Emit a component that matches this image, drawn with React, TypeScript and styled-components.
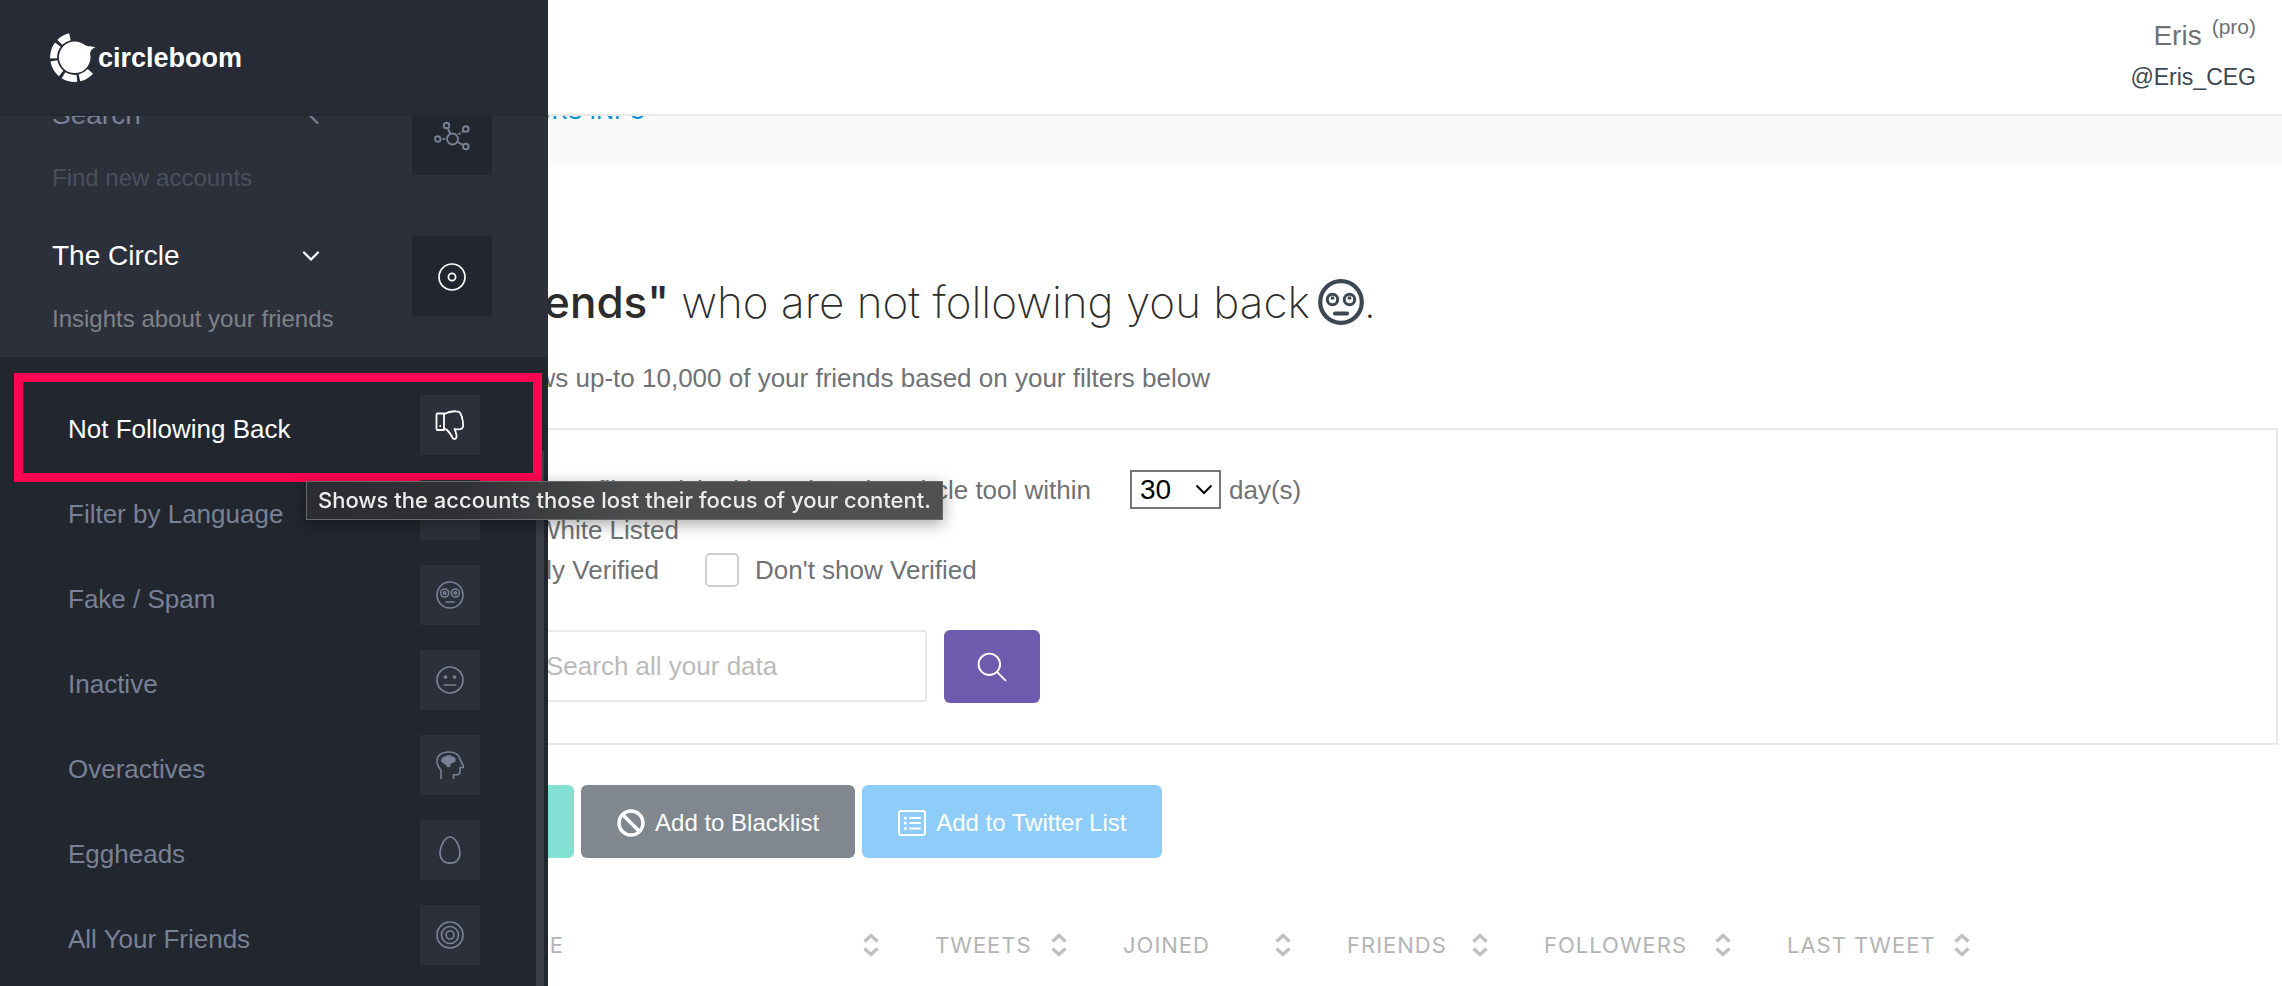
import React from 'react';
import styled, { createGlobalStyle } from 'styled-components';

const sans = '"Liberation Sans", Arial, sans-serif';
const display = 'Inter, "Liberation Sans", sans-serif';

const GlobalStyle = createGlobalStyle`
  * { box-sizing: border-box; }
  html, body { margin: 0; }
  body {
    background: #fff;
    color: #6f7275;
    font: 26px/40px ${sans};
    overflow: hidden;
  }
  button, input, select { font-family: inherit; }
  h1, p, ul { margin: 0; padding: 0; }
`;

/* ---------- page frame ---------- */

const Page = styled.div`
  min-height: 100vh;
  padding: 70px 4px 0 140px;
`;

const TopBar = styled.header`
  position: fixed;
  inset: 0 0 auto 0;
  z-index: 2;
  height: 116px;
  padding: 14px 26px 0;
  background: #fff;
  border-bottom: 2px solid #e9e9e9;
  display: flex;
  flex-direction: column;
  align-items: flex-end;
`;

const UserName = styled.div`
  font-size: 28px;
  line-height: 44px;
  display: flex;
  gap: 10px;
`;

const Plan = styled.span`
  font-size: 21px;
  line-height: 26px;
`;

const Handle = styled.a`
  color: #3b4752;
  font-size: 23px;
  line-height: 38px;
  text-decoration: none;
`;

const Crumbs = styled.nav`
  margin: 0 -4px 0 -140px;
  height: 95px;
  padding: 20px 0 0 534px;
  background: #fafafa;
  a {
    color: #0090d9;
    font: 24px/38px ${display};
    text-decoration: none;
  }
`;

/* ---------- sidebar ---------- */

const Sidebar = styled.aside`
  position: fixed;
  inset: 0 auto 0 0;
  z-index: 3;
  width: 548px;
  background: #2c303b;
  overflow: hidden;
  display: flex;
  flex-direction: column;
`;

const Brand = styled.div`
  flex: none;
  position: relative;
  z-index: 1;
  height: 116px;
  margin-bottom: -21px;
  padding: 2px 50px 0;
  background: #272b35;
  border-bottom: 2px solid #242831;
  display: flex;
  align-items: center;
  color: #fff;
  font: bold 27px/40px ${sans};
`;

const MenuItem = styled.div<{ $active?: boolean }>`
  flex: none;
  height: ${(p) => (p.$active ? 121 : 141)}px;
  padding: 0 56px 0 52px;
  display: flex;
  justify-content: space-between;
  color: ${(p) => (p.$active ? '#fff' : '#788195')};
`;

const MenuText = styled.div`
  width: 288px;
  white-space: nowrap;
`;

const MenuTitle = styled.button`
  width: 100%;
  padding: 0 20px 0 0;
  border: 0;
  background: none;
  color: inherit;
  font-size: 28px;
  line-height: 40px;
  display: flex;
  align-items: center;
  justify-content: space-between;
`;

const MenuDetail = styled.p<{ $active?: boolean }>`
  margin-top: 27px;
  font-size: 24px;
  line-height: 32px;
  color: ${(p) => (p.$active ? '#7e8188' : '#4b4f5d')};
`;

const IconBox = styled.span<{ $large?: boolean }>`
  flex: none;
  width: ${(p) => (p.$large ? 80 : 60)}px;
  height: ${(p) => (p.$large ? 80 : 60)}px;
  padding-top: ${(p) => (p.$large ? 2 : 0)}px;
  background: ${(p) => (p.$large ? '#22262f' : '#2c303b')};
  display: grid;
  place-items: center;
`;

const SubMenu = styled.ul`
  flex: 1;
  position: relative;
  padding: 38px 68px 0;
  background: #22262f;
  list-style: none;
`;

const SubItem = styled.li`
  position: relative;
  margin-bottom: 25px;
`;

const SubLink = styled.a<{ $active?: boolean }>`
  height: 60px;
  display: flex;
  align-items: flex-end;
  justify-content: space-between;
  color: ${(p) => (p.$active ? '#fff' : '#788195')};
  line-height: 52px;
  text-decoration: none;
`;

const Highlight = styled.div`
  position: absolute;
  inset: -22px -62px -27px -54px;
  border: 9px solid #ff0450;
`;

const ScrollThumb = styled.div`
  position: absolute;
  inset: 94px 4px 0 auto;
  width: 8px;
  background: #393e49;
`;

const Tooltip = styled.div`
  position: fixed;
  top: 481px;
  left: 306px;
  z-index: 4;
  padding: 0 11px;
  border: 1px solid #68696b;
  background: linear-gradient(90deg, #2c2d31 0, #2f3034 24%, #4c4c4d 50%, #505051);
  box-shadow: 0 4px 16px rgba(0, 0, 0, 0.35);
  color: #ececec;
  font: 500 22px/37px ${display};
  white-space: nowrap;
`;

/* ---------- content ---------- */

const Heading = styled.h1`
  width: 1236px;
  margin-top: 105px;
  color: #2c2c2c;
  font: 200 44px/64px ${display};
  display: flex;
  justify-content: flex-end;
  align-items: center;
  white-space: pre;
  strong { font-weight: 500; }
  svg { margin-left: 8px; }
`;

const Lead = styled.p`
  width: 1070px;
  margin-top: 24px;
  text-align: right;
  white-space: nowrap;
`;

const Panel = styled.form`
  margin-top: 30px;
  padding: 40px 0;
  border: 2px solid #e9e9e9;
`;

const Line = styled.div`
  height: 40px;
  display: flex;
  align-items: center;
`;

const Lining = styled.label<{ $width: number }>`
  width: ${(p) => p.$width}px;
  display: flex;
  justify-content: flex-end;
  align-items: center;
  gap: 17px;
  white-space: nowrap;
`;

const CheckLabel = styled.label`
  margin-left: 46px;
  display: flex;
  align-items: center;
  gap: 16px;
`;

const Check = styled.input`
  appearance: none;
  width: 34px;
  height: 34px;
  margin: 0;
  border: 2px solid #d0d0d0;
  border-radius: 5px;
  background: #fff;
`;

const SelectWrap = styled.span`
  position: relative;
  margin: 0 8px 0 39px;
  display: flex;
  align-self: flex-start;
  svg {
    position: absolute;
    top: 14px;
    right: 8px;
    pointer-events: none;
  }
`;

const Select = styled.select`
  appearance: none;
  width: 91px;
  height: 39px;
  padding: 0 8px;
  border: 2px solid #767676;
  border-radius: 0;
  background: #fff;
  color: #000;
  font-size: 28px;
  line-height: 32px;
`;

const SearchRow = styled.div`
  margin-top: 40px;
  padding-left: 384px;
  display: flex;
  gap: 17px;
`;

const SearchInput = styled.input`
  width: 401px;
  height: 72px;
  padding: 0 18px;
  border: 2px solid #e9e9e9;
  border-radius: 3px;
  font-size: 26px;
  &::placeholder { color: #bababa; opacity: 1; }
`;

const Button = styled.button<{ $bg: string }>`
  height: 73px;
  padding: 2px 36px 0;
  border: 0;
  border-radius: 6px;
  background: ${(p) => p.$bg};
  color: #fff;
  font-size: 24px;
  line-height: 36px;
  display: flex;
  align-items: center;
  gap: 10px;
  white-space: nowrap;
`;

const SearchButton = styled(Button)`
  width: 96px;
  padding: 0;
  justify-content: center;
`;

const Actions = styled.div`
  margin: 40px 0 67px;
  padding-left: 206px;
  display: flex;
  gap: 7px;
`;

const Table = styled.table`
  border-collapse: collapse;
  table-layout: fixed;
  width: 100%;
  th { padding: 0; }
`;

const SortButton = styled.button`
  width: 100%;
  height: 40px;
  padding: 0 56px 0 0;
  border: 0;
  background: none;
  color: #b4b4b4;
  font: 400 22px/40px ${display};
  letter-spacing: 1px;
  text-align: left;
  display: flex;
  justify-content: space-between;
  align-items: center;
`;

const Th = styled.th<{ $width: number }>`
  width: ${(p) => p.$width}px;
`;

/* ---------- drawings ---------- */

const polar = (r: number, deg: number) => {
  const a = (deg * Math.PI) / 180;
  return `${(27.7 + r * Math.cos(a)).toFixed(2)} ${(25.3 - r * Math.sin(a)).toFixed(2)}`;
};

const ringParts = [[103, 135], [143, 183], [190, 230], [238, 276], [283, 318]];

const Logo = () => (
  <svg width="48" height="52" viewBox="3 0 48 52" fill="#fff" aria-hidden="true">
    {ringParts.map(([a, b]) => (
      <path
        key={a}
        d={`M${polar(24.6, a)}A24.6 24.6 0 0 0 ${polar(24.6, b)}L${polar(17.6, b)}A17.6 17.6 0 0 1 ${polar(17.6, a)}Z`}
      />
    ))}
    <circle cx="27.7" cy="25.3" r="15.8" />
    <path d="M35 11.5c3 2 6 3 8 2.8L48.5 15.2c-3 1-5 3-5.5 6.5l-4 3z" />
  </svg>
);

const Stroke = ({ size = 28, width = 1.7, children }: { size?: number; width?: number; children: React.ReactNode }) => (
  <svg
    width={size}
    height={size}
    viewBox="0 0 28 28"
    fill="none"
    stroke="currentColor"
    strokeWidth={width}
    strokeLinecap="round"
    strokeLinejoin="round"
    aria-hidden="true"
  >
    {children}
  </svg>
);

const NetworkIcon = () => (
  <svg width="36" height="30" viewBox="0 0 36 30" fill="none" stroke="currentColor" strokeWidth="1.9" aria-hidden="true">
    <circle cx="18.5" cy="18" r="5.5" />
    <circle cx="3.8" cy="18" r="2.8" />
    <circle cx="12.5" cy="4.5" r="2.8" />
    <circle cx="31.8" cy="8" r="2.8" />
    <circle cx="31.8" cy="25.5" r="2.8" />
    <path d="M8.5 18h2.5M13.8 7.2l2.5 5.8M23.3 20.8l6 3.4M24.5 13.5l2-1.5M27.8 11.2l1.5-1" />
  </svg>
);

const DiscIcon = () => (
  <Stroke>
    <circle cx="14" cy="14" r="13" />
    <circle cx="14" cy="14" r="3.6" />
  </Stroke>
);

const ThumbsDownIcon = () => (
  <svg width="30" height="32" viewBox="0 0 30 32" fill="none" stroke="currentColor" strokeWidth="1.8" strokeLinejoin="round" aria-hidden="true">
    <path d="M9 4.500H2.500a1 1 0 0 0-1 1v14.500a1 1 0 0 0 1 1H9z" />
    <path d="M9 5C13 3 17 2 21 2.300c3.500 0 4.800 1.400 5 3.700 1 1.200 1.200 2.400 1 3.600 1 1.400 1.200 2.600.8 4 1 3.800 0 6.200-2.500 6.600-2.500.3-4.300 0-5.800-.2 1.500 3.500 2.500 6 2 8.300-.5 2.200-3.500 2.500-4.200 0C16 25 13 22 11.500 20.500L9 19.500" />
    <circle cx="5.2" cy="17" r="1" fill="currentColor" stroke="none" />
  </svg>
);

const RollingEyesIcon = () => (
  <Stroke width={1.6}>
    <circle cx="14" cy="14" r="13" />
    <circle cx="8.7" cy="12" r="4" />
    <circle cx="19.3" cy="12" r="4" />
    <circle cx="8.7" cy="12" r="1.2" />
    <circle cx="19.3" cy="12" r="1.2" />
    <path d="M10 21h8" />
  </Stroke>
);

const NeutralIcon = () => (
  <Stroke>
    <circle cx="14" cy="14" r="13" />
    <circle cx="9.5" cy="11" r="1" fill="currentColor" />
    <circle cx="18.5" cy="11" r="1" fill="currentColor" />
    <path d="M8.5 19h11" />
  </Stroke>
);

const HeadIcon = () => (
  <Stroke width={1.6}>
    <path d="M5 27.500V19C2.500 16.500 1 14 1 10.500 1 4.500 5.500 1 13 1c7 0 10.500 2.500 11.500 8.500L27.500 15v1.500H24V20c0 2.500-1 3.800-3 3.800h-3.500v3.700" />
    <path d="M6 8.500C7 6.500 9 6.500 10 6c2-1.500 5-1 6 .2 2.500 0 3.500 2 2.500 3.800-1 1.500-3 1-4 2l-1.200 3.500-2-.3-.5-2.200c-2 .5-2.500-1-3-1.500C6 11 5.500 9.500 6 8.500z" fill="currentColor" />
  </Stroke>
);

const EggIcon = () => (
  <Stroke>
    <path d="M14 1C9 1 4 9.500 4 17c0 6.500 4.500 10.200 10 10.200S24 23.500 24 17C24 9.500 19 1 14 1z" />
  </Stroke>
);

const TargetIcon = () => (
  <Stroke>
    <circle cx="14" cy="14" r="13" />
    <circle cx="14" cy="14" r="8.5" />
    <circle cx="14" cy="14" r="4" />
  </Stroke>
);

const HeadingFace = () => (
  <svg width="46" height="46" viewBox="0 0 46 46" fill="none" stroke="#3b4752" aria-hidden="true">
    <circle cx="23" cy="23" r="20.8" strokeWidth="4.2" />
    <circle cx="14.5" cy="20.5" r="5.2" strokeWidth="3" />
    <circle cx="31.5" cy="20.5" r="5.2" strokeWidth="3" />
    <path d="M14.5 17.5v3M31.5 17.5v3" strokeWidth="3.5" />
    <path d="M17 34.5h12" strokeWidth="4.2" strokeLinecap="round" />
  </svg>
);

const Chevron = ({ left }: { left?: boolean }) => (
  <svg width="18" height="18" viewBox="0 0 18 18" fill="none" stroke="currentColor" strokeWidth="2.2" strokeLinecap="round" aria-hidden="true">
    <path d={left ? 'M15 1L7.5 9l8 8' : 'M2 5.5l7 7 7-7'} />
  </svg>
);

const SearchIcon = () => (
  <Stroke size={30} width={1.8}>
    <circle cx="11.5" cy="11.5" r="10" />
    <path d="M19 19l7.5 7.5" />
  </Stroke>
);

const BanIcon = () => (
  <Stroke width={3.4}>
    <circle cx="14" cy="14" r="12" />
    <path d="M6 6l16 16" />
  </Stroke>
);

const ListIcon = () => (
  <Stroke width={2}>
    <rect x="1" y="2" width="26" height="24" rx="2" />
    <path d="M12 9h10M12 14h10M12 19.5h10" />
    <path d="M7.3 9h.1M7.3 14h.1M7.3 19.5h.1" strokeWidth="3" />
  </Stroke>
);

const SortIcon = () => (
  <svg width="16" height="24" viewBox="0 0 16 24" fill="none" stroke="#c0c0c0" strokeWidth="3.4" aria-hidden="true">
    <path d="M1.5 8.5L8 2.500l6.500 6M1.500 15.500l6.500 6 6.500-6" />
  </svg>
);

/* ---------- data ---------- */

const subItems = [
  { label: 'Not Following Back', icon: <ThumbsDownIcon />, active: true },
  { label: 'Filter by Language', icon: null },
  { label: 'Fake / Spam', icon: <RollingEyesIcon /> },
  { label: 'Inactive', icon: <NeutralIcon /> },
  { label: 'Overactives', icon: <HeadIcon /> },
  { label: 'Eggheads', icon: <EggIcon /> },
  { label: 'All Your Friends', icon: <TargetIcon /> },
];

const columns = [
  { label: 'TWEETS', width: 188 },
  { label: 'JOINED', width: 224 },
  { label: 'FRIENDS', width: 197 },
  { label: 'FOLLOWERS', width: 243 },
  { label: 'LAST TWEET', width: 239 },
];

export default function App() {
  return (
    <>
      <GlobalStyle />
      <TopBar>
        <UserName>
          Eris <Plan>(pro)</Plan>
        </UserName>
        <Handle href="#profile">@Eris_CEG</Handle>
      </TopBar>

      <Sidebar>
        <Brand>
          <Logo />
          circleboom
        </Brand>
        <MenuItem>
          <MenuText>
            <MenuTitle>
              Search <Chevron left />
            </MenuTitle>
            <MenuDetail>Find new accounts</MenuDetail>
          </MenuText>
          <IconBox $large>
            <NetworkIcon />
          </IconBox>
        </MenuItem>
        <MenuItem $active>
          <MenuText>
            <MenuTitle>
              The Circle <Chevron />
            </MenuTitle>
            <MenuDetail $active>Insights about your friends</MenuDetail>
          </MenuText>
          <IconBox $large>
            <DiscIcon />
          </IconBox>
        </MenuItem>
        <SubMenu>
          <ScrollThumb />
          {subItems.map((item) => (
            <SubItem key={item.label}>
              <SubLink href="#list" $active={item.active}>
                {item.label}
                <IconBox>{item.icon}</IconBox>
              </SubLink>
              {item.active && <Highlight />}
            </SubItem>
          ))}
        </SubMenu>
      </Sidebar>
      <Tooltip role="tooltip">Shows the accounts those lost their focus of your content.</Tooltip>

      <Page>
        <Crumbs>
          <a href="#info">CKS INFO</a>
        </Crumbs>
        <main>
          <Heading>
            <strong>"Friends"</strong> who are not following you back<HeadingFace />.
          </Heading>
          <Lead>Shows up-to 10,000 of your friends based on your filters below</Lead>
          <Panel>
            <Line>
              <Lining $width={949} htmlFor="days">
                profiles I visited by using The Circle tool within
              </Lining>
              <SelectWrap>
                <Select id="days" defaultValue="30">
                  <option>30</option>
                </Select>
                <svg width="18" height="12" viewBox="0 0 18 12" fill="none" stroke="#000" strokeWidth="2" aria-hidden="true">
                  <path d="M1.5 1.5L9 9l7.5-7.5" />
                </svg>
              </SelectWrap>
              day(s)
            </Line>
            <Line>
              <Lining $width={537}>
                <Check type="checkbox" />
                White Listed
              </Lining>
            </Line>
            <Line>
              <Lining $width={517}>
                <Check type="checkbox" />
                Only Verified
              </Lining>
              <CheckLabel>
                <Check type="checkbox" />
                Don't show Verified
              </CheckLabel>
            </Line>
            <SearchRow>
              <SearchInput placeholder="Search all your data" aria-label="Search all your data" />
              <SearchButton type="button" $bg="#6d5cae" aria-label="Search">
                <SearchIcon />
              </SearchButton>
            </SearchRow>
          </Panel>
          <Actions>
            <Button $bg="#83e1d3">Whitelist users</Button>
            <Button $bg="#80878f">
              <BanIcon />
              Add to Blacklist
            </Button>
            <Button $bg="#8ecdfa">
              <ListIcon />
              Add to Twitter List
            </Button>
          </Actions>
          <Table>
            <thead>
              <tr>
                <Th $width={355} />
                <Th $width={440}>
                  <SortButton>
                    NAME <SortIcon />
                  </SortButton>
                </Th>
                {columns.map((c) => (
                  <Th key={c.label} $width={c.width}>
                    <SortButton>
                      {c.label} <SortIcon />
                    </SortButton>
                  </Th>
                ))}
                <th />
              </tr>
            </thead>
          </Table>
        </main>
      </Page>
    </>
  );
}
